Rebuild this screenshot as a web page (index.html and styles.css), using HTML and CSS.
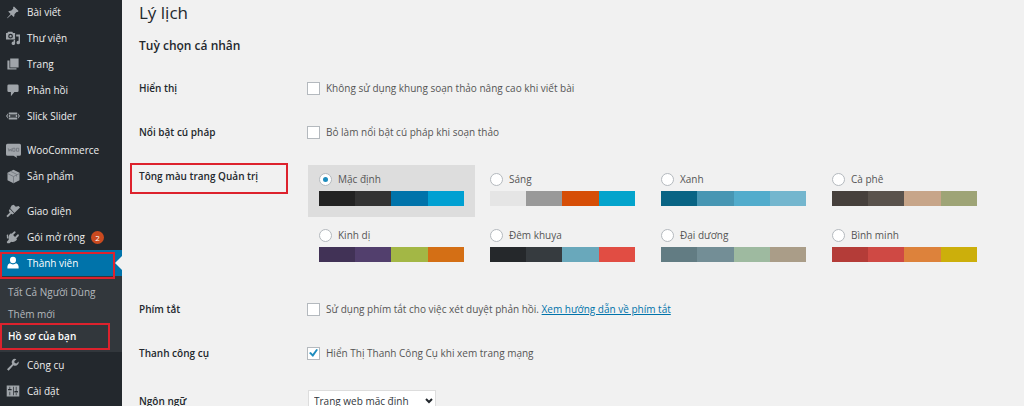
FILE: index.html
```html
<!DOCTYPE html>
<html lang="vi">
<head>
<meta charset="utf-8">
<meta name="viewport" content="width=device-width, initial-scale=1">
<title>Lý lịch</title>
<link rel="stylesheet" href="styles.css">
</head>
<body>
<div class="layout">
  <nav class="sidebar" aria-label="Menu">
    <ul class="menu">
      <li><a class="menu-link" href="#"><svg class="icon" viewBox="0 0 20 20"><path d="M10.400 3l1-1L18 8.600l-1 1a2.600 2.600 0 0 1-1.900.5l-3 3.100c.2 1.500-.1 3-1.100 4l-3.300-3.400-5.600 5.200-.6-.6 5.100-5.600L3.200 9.400c1-1 2.500-1.300 4-1.100l3.200-3c-.3-.8-.4-1.600 0-2.300z"/></svg>Bài viết</a></li>
      <li><a class="menu-link" href="#"><svg class="icon" viewBox="0 0 20 20"><path fill-rule="evenodd" d="M0 3h2l1-2h6l1 2h3v9H0zM6.500 4a3.400 3.400 0 1 0 0 6.800 3.400 3.400 0 0 0 0-6.800zm0 1.700a1.700 1.700 0 1 1 0 3.400 1.700 1.700 0 0 1 0-3.400z"/><path d="M14.500 5H20v11.500a2.500 2.500 0 1 1-2-2.400V8h-3.500zM11 13h2v4.500a2.500 2.500 0 1 1-2-2.400z"/></svg>Thư viện</a></li>
      <li><a class="menu-link" href="#"><svg class="icon" viewBox="0 0 20 20"><path d="M6 2h12v13H6zM2 5h3v11h10v2H2z"/></svg>Trang</a></li>
      <li><a class="menu-link" href="#"><svg class="icon" viewBox="0 0 20 20"><path d="M4 2h12q2 0 2 2v7q0 2-2 2h-4l-5 6v-6H4q-2 0-2-2V4q0-2 2-2z"/></svg>Phản hồi</a></li>
      <li><a class="menu-link" href="#"><svg class="icon" viewBox="0 0 20 20"><path fill-rule="evenodd" d="M4 5h12v2H4zM4 13h12v2H4zM4 8h12v4H4zM3 6v2L2 10l1 2v2L0 10zM17 6v2l1 2-1 2v2l3-4zM6 9v2h8V9z"/></svg>Slick Slider</a></li>
      <li class="group-start"><a class="menu-link" href="#"><svg class="icon icon-wide" viewBox="0 0 20 20"><path d="M2 1h16q2 0 2 2v12q0 2-2 2h-4l1 3-5-3H2q-2 0-2-2V3q0-2 2-2z"/><path class="icon-detail" d="M3 7l1 4 1.500-3L7 11l1-4M9 7h3v4H9zM14 7h3v4h-3z"/></svg>WooCommerce</a></li>
      <li><a class="menu-link" href="#"><svg class="icon icon-wide" viewBox="0 0 20 20"><path d="M10 1l8 4v10l-8 4-8-4V5z"/><path class="icon-detail" d="M2 6l8 4 8-4M10 10v9M6 3l8 4v3"/></svg>Sản phẩm</a></li>
      <li class="group-start group-plugins"><a class="menu-link" href="#"><svg class="icon" viewBox="0 0 20 20"><path d="M8 2l3-1 3 3 4-1 2 2-8 8-6-7zM5.500 7l6 6.500-2 1.500-2-1-5 5-2-2 5-5-1.500-2.500z"/></svg>Giao diện</a></li>
      <li><a class="menu-link" href="#"><svg class="icon" viewBox="0 0 20 20"><path d="M13.100 4.400L10.200 7.200l2.700 2.700 3.400-3.500q1.500-.8 2 .5t-.5 2.200l-3 3 1 1c-2 3-5 4.600-8.300 3.600L5 19H2l-1-2 3-3.500C2.500 10 4 6.500 7 4.500l1 1 3.500-3.500q1.200-.6 2 .4t-.4 2z"/><path d="M1 7l2-1v5l-1.500 2z"/></svg>Gói mở rộng<span class="count">2</span></a></li>
      <li class="current">
        <a class="menu-link" href="#" aria-current="true"><svg class="icon" viewBox="0 0 20 20"><path d="M10 1a4.300 4.600 0 1 1 0 9.200A4.300 4.600 0 0 1 10 1zM5.500 10.500q4.500 3 9 0Q18 12 18 15v3H2v-3q0-3 3.500-4.500z"/></svg>Thành viên</a>
        <ul class="submenu">
          <li><a href="#">Tất Cả Người Dùng</a></li>
          <li><a href="#">Thêm mới</a></li>
          <li class="active"><a href="#" aria-current="page">Hồ sơ của bạn</a></li>
        </ul>
      </li>
      <li><a class="menu-link" href="#"><svg class="icon" viewBox="0 0 20 20"><path d="M16.700 9.300a4.700 4.700 0 0 1-6 .9l-7 7.900-2.300-2 7.500-7.500a4.700 4.700 0 0 1 5.900-6.900l-3 3 .6 2.600 2.600.7 3-3.100c.5 1.500 0 3.200-1.300 4.400z"/></svg>Công cụ</a></li>
      <li><a class="menu-link" href="#"><svg class="icon" viewBox="0 0 20 20"><path fill-rule="evenodd" d="M1 2h18v16H1zM5 4v3H3v2h5V7H6V4zM10 4v12h1V4zM14 4v6h-2v2h5v-2h-2V4zM5 11v5h1v-5zM14 13v3h1v-3z"/></svg>Cài đặt</a></li>
    </ul>
  </nav>

  <main class="content">
    <h1>Lý lịch</h1>
    <h2>Tuỳ chọn cá nhân</h2>
    <form class="form">
      <div class="row">
        <div class="row-title">Hiển thị</div>
        <label class="choice"><input type="checkbox">Không sử dụng khung soạn thảo nâng cao khi viết bài</label>
      </div>
      <div class="row">
        <div class="row-title">Nổi bật cú pháp</div>
        <label class="choice"><input type="checkbox">Bỏ làm nổi bật cú pháp khi soạn thảo</label>
      </div>
      <div class="row row-schemes">
        <div class="row-title framed" id="scheme-title">Tông màu trang Quản trị</div>
        <div class="schemes" role="radiogroup" aria-labelledby="scheme-title">
          <label class="scheme selected"><span class="choice"><input type="radio" name="scheme" checked>Mặc định</span><span class="palette default"></span></label>
          <label class="scheme"><span class="choice"><input type="radio" name="scheme">Sáng</span><span class="palette light"></span></label>
          <label class="scheme"><span class="choice"><input type="radio" name="scheme">Xanh</span><span class="palette blue"></span></label>
          <label class="scheme"><span class="choice"><input type="radio" name="scheme">Cà phê</span><span class="palette coffee"></span></label>
          <label class="scheme"><span class="choice"><input type="radio" name="scheme">Kinh dị</span><span class="palette ectoplasm"></span></label>
          <label class="scheme"><span class="choice"><input type="radio" name="scheme">Đêm khuya</span><span class="palette midnight"></span></label>
          <label class="scheme"><span class="choice"><input type="radio" name="scheme">Đại dương</span><span class="palette ocean"></span></label>
          <label class="scheme"><span class="choice"><input type="radio" name="scheme">Bình minh</span><span class="palette sunrise"></span></label>
        </div>
      </div>
      <div class="row">
        <div class="row-title">Phím tắt</div>
        <div class="choice"><input type="checkbox" id="shortcuts"><span><label for="shortcuts">Sử dụng phím tắt cho việc xét duyệt phản hồi.</label> <a href="#">Xem hướng dẫn về phím tắt</a></span></div>
      </div>
      <div class="row">
        <div class="row-title">Thanh công cụ</div>
        <label class="choice"><input type="checkbox" checked>Hiển Thị Thanh Công Cụ khi xem trang mạng</label>
      </div>
      <div class="row row-language">
        <label class="row-title" for="language">Ngôn ngữ</label>
        <div class="select-box">
          <select class="select" id="language"><option>Trang web mặc định</option></select>
          <svg class="chevron" viewBox="0 0 8 6" aria-hidden="true"><path d="M1 1l3 3 3-3"/></svg>
        </div>
      </div>
    </form>
  </main>
</div>
</body>
</html>
```
FILE: styles.css
```css
* { box-sizing: border-box; }

body {
  margin: 0;
  background: #f1f1f1;
  color: #555;
  font: 10px/15px "Open Sans", "Noto Sans", sans-serif;
}

ul { margin: 0; padding: 0; list-style: none; }

.layout {
  display: flex;
  height: 100vh;
  overflow: hidden;
}

/* Sidebar */
.sidebar {
  flex: none;
  width: 122px;
  background: #23282d;
}

.menu { margin-top: -1px; }

.menu-link {
  display: flex;
  align-items: center;
  height: 26px;
  padding-left: 6px;
  gap: 7px;
  color: #eee;
  text-decoration: none;
  white-space: nowrap;
}

.icon {
  flex: none;
  width: 14px;
  height: 14px;
  fill: #a0a5aa;
}

.icon-wide { width: 15px; height: 15px; margin-right: -1px; }
.icon-detail { fill: none; stroke: #6c7278; stroke-width: 1; }

.group-start { margin-top: 8px; }
.group-plugins { margin-top: 9px; }

.count {
  width: 13px;
  height: 13px;
  margin-left: -1px;
  border-radius: 50%;
  background: #ca4a1f;
  color: #fff;
  font-size: 8px;
  line-height: 13px;
  text-align: center;
}

.current .menu-link {
  position: relative;
  background: #0073aa;
  color: #fff;
}

.current .icon { fill: #fff; }

.current .menu-link::before {
  content: "";
  position: absolute;
  right: 0;
  top: 6px;
  border: 7px solid transparent;
  border-left-width: 0;
  border-right-color: #f1f1f1;
}

.current .menu-link::after,
.active::after,
.framed::after {
  content: "";
  position: absolute;
  border: 2px solid #dd222d;
}

.current .menu-link::after { inset: 2px 7px -3px 0; z-index: 1; }

.submenu {
  padding: 5px 0;
  background: #32373c;
}

.submenu li { position: relative; }

.submenu a {
  display: block;
  padding-left: 8px;
  color: #b4b9be;
  line-height: 22px;
  text-decoration: none;
  white-space: nowrap;
}

.submenu .active a { color: #fff; font-weight: 600; }
.active::after { inset: -2px 12px -3px 0; }

/* Profile form */
.content {
  flex: 1;
  min-width: 0;
  padding: 0 17px;
}

h1, h2 { margin: 0; color: #23282d; }

h1 {
  font-size: 17px;
  font-weight: 400;
  line-height: 26px;
}

h2 {
  margin-top: 10px;
  font-size: 12px;
  font-weight: 600;
  line-height: 20px;
}

.form { margin-top: 10px; }

.row {
  display: grid;
  grid-template-columns: 168px 1fr;
  align-items: center;
  min-height: 44px;
}

.row-title {
  color: #23282d;
  font-weight: 600;
}

.row-schemes {
  align-items: start;
  padding: 11px 0 14px;
}

.row-language { min-height: 52px; }

.framed {
  position: relative;
  margin-top: 4px;
}

.framed::after { inset: -6px 19px -10px -9px; }

.choice {
  display: flex;
  align-items: center;
  gap: 6px;
}

input {
  appearance: none;
  display: grid;
  place-items: center;
  flex: none;
  width: 13px;
  height: 13px;
  margin: 0;
  border: 1px solid #b4b9be;
  background: #fff;
}

input[type="radio"] { border-radius: 50%; }

input[type="radio"]:checked::before {
  content: "";
  width: 5px;
  height: 5px;
  border-radius: 50%;
  background: #1e8cbe;
}

input[type="checkbox"]:checked::before {
  content: "";
  width: 9px;
  height: 8px;
  background: #1e8cbe;
  clip-path: polygon(0 50%, 20% 36%, 40% 64%, 82% 0, 100% 10%, 44% 100%);
}

.schemes {
  display: grid;
  grid-template-columns: repeat(auto-fill, 167px);
  gap: 4px;
  padding-left: 1px;
}

.scheme { padding: 7px 11px 11px; }
.scheme.selected { background: #ddd; }

.palette {
  display: block;
  height: 15px;
  margin-top: 4px;
  background: linear-gradient(90deg, var(--a) 25%, var(--b) 25% 50%, var(--c) 50% 75%, var(--d) 75%);
}

.default { --a: #222; --b: #333; --c: #0073aa; --d: #00a0d2; }
.light { --a: #e5e5e5; --b: #999; --c: #d64e07; --d: #04a4cc; }
.blue { --a: #096484; --b: #4796b3; --c: #52accc; --d: #74b6ce; }
.coffee { --a: #46403c; --b: #59524c; --c: #c7a589; --d: #9ea476; }
.ectoplasm { --a: #413256; --b: #523f6d; --c: #a3b745; --d: #d46f15; }
.midnight { --a: #25282b; --b: #363b3f; --c: #69a8bb; --d: #e14d43; }
.ocean { --a: #627c83; --b: #738e96; --c: #9ebaa0; --d: #aa9d88; }
.sunrise { --a: #b43c38; --b: #cf4944; --c: #dd823b; --d: #ccaf0b; }

.content a { color: #0073aa; }

.select-box {
  position: relative;
  justify-self: start;
  margin-left: 1px;
}

.select {
  appearance: none;
  display: block;
  width: 128px;
  height: 22px;
  padding: 0 16px 0 5px;
  border: 1px solid #ddd;
  border-radius: 0;
  background: #fff;
  color: #32373c;
  font: inherit;
}

.chevron {
  position: absolute;
  top: 8px;
  right: 3px;
  width: 8px;
  height: 6px;
  fill: none;
  stroke: #23282d;
  stroke-width: 2;
  pointer-events: none;
}
```
